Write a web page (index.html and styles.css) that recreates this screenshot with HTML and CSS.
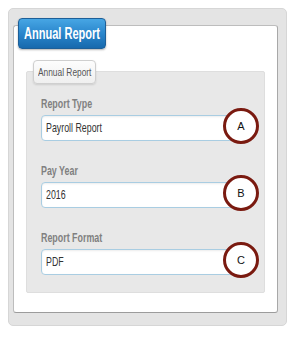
FILE: index.html
```html
<!DOCTYPE html>
<html lang="en">
<head>
    <meta charset="UTF-8">
    <title>Annual Report</title>
    <link rel="stylesheet" href="styles.css">
</head>
<body>
    <div class="frame">
        <div class="tab"><span class="narrow">Annual Report</span></div>
        <div class="panel">
            <div class="group">
                <div class="legend"><span class="narrow">Annual Report</span></div>

                <div class="field">
                    <div class="label"><span class="narrow">Report Type</span></div>
                    <div class="input-row">
                        <div class="input"><span class="narrow">Payroll Report</span></div>
                        <span class="marker">A</span>
                    </div>
                </div>

                <div class="field">
                    <div class="label"><span class="narrow">Pay Year</span></div>
                    <div class="input-row">
                        <div class="input"><span class="narrow">2016</span></div>
                        <span class="marker">B</span>
                    </div>
                </div>

                <div class="field">
                    <div class="label"><span class="narrow">Report Format</span></div>
                    <div class="input-row">
                        <div class="input"><span class="narrow">PDF</span></div>
                        <span class="marker">C</span>
                    </div>
                </div>
            </div>
        </div>
    </div>
</body>
</html>
```

FILE: styles.css
```css
body {
    margin: 8px;
    font-family: 'Liberation Sans', Arial, sans-serif;
    background: #fff;
}

/* glyphs in the original are squeezed horizontally */
.narrow {
    display: inline-block;
    white-space: nowrap;
    transform: scaleX(0.72);
    transform-origin: left center;
}

.frame {
    position: relative;
    width: 279px;
    height: 318px;
    box-sizing: border-box;
    padding: 16px 8px 12px 4px;
    background: #e4e4e4;
    border: 1px solid #d6d6d6;
    border-radius: 5px;
    display: flex;
}

.tab {
    position: absolute;
    left: 9px;
    top: 9px;
    width: 88px;
    height: 31px;
    box-sizing: border-box;
    padding-left: 5px;
    border: 1px solid #1d5f98;
    border-radius: 4px;
    background: linear-gradient(#47a6e4, #2a86cc 50%, #1769ad);
    color: #fff;
    font-weight: bold;
    font-size: 16px;
    line-height: 29px;
    box-shadow: 0 1px 2px rgba(0, 0, 0, 0.3);
    overflow: hidden;
}

.tab .narrow {
    transform: scaleX(0.69);
}

.panel {
    flex: 1;
    background: #fff;
    border: 1px solid #bdbdbd;
    border-bottom-color: #9c9c9c;
    border-right-color: #a8a8a8;
    border-radius: 3px;
    padding: 45px 12px 19px 12px;
}

.group {
    height: 100%;
    box-sizing: border-box;
    background: #e8e8e8;
    border: 1px solid #dedede;
    border-radius: 2px;
    padding: 0 0 0 14px;
}

.legend {
    width: 63px;
    height: 24px;
    box-sizing: border-box;
    margin: -12px 0 0 -8px;
    padding-left: 4px;
    border: 1px solid #cfcfcf;
    border-radius: 4px;
    background: linear-gradient(#fdfdfd, #efefef);
    box-shadow: 0 1px 2px rgba(0, 0, 0, 0.12);
    color: #555;
    font-size: 11px;
    line-height: 22px;
    overflow: hidden;
}

.legend .narrow {
    transform: scaleX(0.76);
}

.field {
    margin-top: 13px;
}

.field + .field {
    margin-top: 23px;
}

.label {
    height: 14px;
    line-height: 14px;
    margin-bottom: 4px;
    color: #808080;
    font-weight: bold;
    font-size: 12px;
}

.label .narrow {
    transform: scaleX(0.74);
}

.input-row {
    position: relative;
    height: 26px;
}

.input {
    width: 200px;
    height: 26px;
    box-sizing: border-box;
    padding: 0 4px;
    border: 1px solid #a9cde2;
    border-radius: 4px;
    background: #fff;
    box-shadow: inset 0 1px 2px rgba(0, 0, 0, 0.08);
    color: #333;
    font-size: 13px;
    line-height: 24px;
    overflow: hidden;
}

.input .narrow {
    transform: scaleX(0.68);
}

.marker {
    position: absolute;
    left: 182px;
    top: -7px;
    width: 36px;
    height: 36px;
    box-sizing: border-box;
    border: 3px solid #7a1a10;
    border-radius: 50%;
    background: #fff;
    color: #111;
    font-size: 11px;
    line-height: 30px;
    text-align: center;
}
```
